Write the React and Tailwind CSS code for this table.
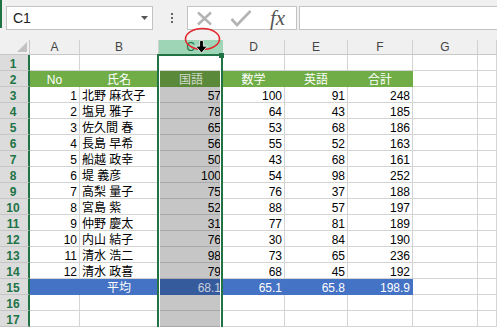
import React from 'react'

const GRID = 'grid grid-cols-[30px_50px_79px_64px_62px_63px_65px_65px_1fr]'
const FONT = { fontFamily: '"Liberation Sans", "Noto Sans CJK JP", sans-serif' }

const KIND = {
  plain: 'bg-white border-r border-b border-[#d4d4d4] text-black',
  active: 'bg-white border-b border-[#d4d4d4] text-black',
  sel: 'bg-[#c6c6c6] border-b border-[#a9a9a9] text-black',
  green: 'bg-[#70ad47] border-r border-b border-[#70ad47] text-white',
  greenSel: 'bg-[#5a8a39] border-b border-[#5a8a39] text-[#d3dacd]',
  blue: 'bg-[#4472c4] border-r border-b border-[#4472c4] text-white',
  blueSel: 'bg-[#365b9d] border-b border-[#365b9d] text-[#c8cfdc]',
}

const ALIGN = {
  left: 'justify-start pl-[2px]',
  right: 'justify-end pr-[2px]',
  center: 'justify-center',
}

function Cell({ kind = 'plain', align = 'right', children }) {
  return (
    <div className={`h-[16px] flex items-end overflow-hidden whitespace-nowrap leading-[12px] text-[12px] ${KIND[kind]} ${ALIGN[align]}`}>
      {children}
    </div>
  )
}

function RowHead({ n }) {
  return (
    <div className="h-[16px] flex items-end justify-center pr-[2px] bg-[#dcdcdc] border-b border-[#c6c6c6] border-r-2 border-r-[#217346] text-[#217346] font-bold text-[12px] leading-[12px]">
      {n}
    </div>
  )
}

const students = [
  [1, '北野 麻衣子', 57, 100, 91, 248],
  [2, '塩見 雅子', 78, 64, 43, 185],
  [3, '佐久間 春', 65, 53, 68, 186],
  [4, '長島 早希', 56, 55, 52, 163],
  [5, '船越 政幸', 50, 43, 68, 161],
  [6, '堤 義彦', 100, 54, 98, 252],
  [7, '高梨 量子', 75, 76, 37, 188],
  [8, '宮島 紫', 52, 88, 57, 197],
  [9, '仲野 慶太', 31, 77, 81, 189],
  [10, '内山 結子', 76, 30, 84, 190],
  [11, '清水 浩二', 98, 73, 65, 236],
  [12, '清水 政喜', 79, 68, 45, 192],
]

function EmptyRow({ n, active }) {
  return (
    <div className={GRID}>
      <RowHead n={n} />
      <Cell />
      <Cell />
      <Cell kind={active ? 'active' : 'sel'} />
      <Cell />
      <Cell />
      <Cell />
      <Cell />
      <Cell />
    </div>
  )
}

function Toolbar() {
  return (
    <div className="h-[40px] bg-[#f0f0f0] flex items-start">
      <div className="w-[2px] h-[28px] bg-[#217346]" />
      {/* name box */}
      <div className="ml-[4px] mt-[6px] w-[147px] h-[24px] bg-white border border-[#c3c3c3] flex items-center justify-between pl-[6px] pr-[4px]">
        <span className="text-[14px] text-[#222] leading-none">C1</span>
        <svg width="7" height="4" viewBox="0 0 7 4"><path d="M0 0h7L3.5 4z" fill="#555" /></svg>
      </div>
      {/* dots */}
      <div className="ml-[18px] mt-[13px] flex flex-col gap-[2px]">
        <span className="w-[2px] h-[2px] bg-[#666]" />
        <span className="w-[2px] h-[2px] bg-[#666]" />
        <span className="w-[2px] h-[2px] bg-[#666]" />
      </div>
      {/* formula buttons */}
      <div className="ml-[14px] mt-[6px] w-[110px] h-[24px] bg-white border border-[#c3c3c3] flex items-center">
        <svg className="ml-[8px]" width="17" height="15" viewBox="0 0 17 15">
          <path d="M2 1.5l13 12M15 1.5l-13 12" stroke="#b3b3b3" strokeWidth="2.4" />
        </svg>
        <svg className="ml-[17px]" width="22" height="17" viewBox="0 0 22 17">
          <path d="M1.5 9l5.5 6L20.5 1" stroke="#b3b3b3" strokeWidth="2.6" fill="none" />
        </svg>
        <span className="ml-[18px] text-[#555] italic text-[21px] leading-none" style={{ fontFamily: '"Liberation Serif", serif' }}>fx</span>
      </div>
      {/* formula input */}
      <div className="ml-[2px] mt-[6px] flex-1 h-[24px] bg-white border-y border-l border-[#c3c3c3]" />
    </div>
  )
}

function ColHeads() {
  const heads = ['A', 'B', 'C', 'D', 'E', 'F', 'G', '']
  return (
    <div className={`${GRID} h-[15px] bg-[#f0f0f0]`}>
      <div className="relative border-r border-b border-[#c8c8c8]">
        <svg className="absolute right-[2px] bottom-[2px]" width="10" height="10" viewBox="0 0 10 10"><path d="M10 0v10H0z" fill="#c2c2c2" /></svg>
      </div>
      {heads.map((h, i) => (
        <div
          key={i}
          className={`flex items-end justify-center leading-[12px] text-[12px] pb-[1px] border-b ${
            h === 'C'
              ? 'bg-[#9fd5b7] text-[#217346] border-[#217346] border-r border-r-[#9fd5b7]'
              : 'text-[#444] border-r border-[#d0d0d0] border-b-[#c8c8c8]'
          }`}
        >
          {h}
        </div>
      ))}
    </div>
  )
}

export default function App() {
  return (
    <div className="relative w-[497px] h-[327px] overflow-hidden bg-white select-none" style={FONT}>
      <Toolbar />
      <ColHeads />

      <EmptyRow n={1} active />

      <div className={GRID}>
        <RowHead n={2} />
        <Cell kind="green" align="center">No</Cell>
        <Cell kind="green" align="center">氏名</Cell>
        <Cell kind="greenSel" align="center">国語</Cell>
        <Cell kind="green" align="center">数学</Cell>
        <Cell kind="green" align="center">英語</Cell>
        <Cell kind="green" align="center">合計</Cell>
        <Cell />
        <Cell />
      </div>

      {students.map(([no, name, jp, math, en, total], i) => (
        <div key={no} className={GRID}>
          <RowHead n={i + 3} />
          <Cell>{no}</Cell>
          <Cell align="left">{name}</Cell>
          <Cell kind="sel">{jp}</Cell>
          <Cell>{math}</Cell>
          <Cell>{en}</Cell>
          <Cell>{total}</Cell>
          <Cell />
          <Cell />
        </div>
      ))}

      <div className={GRID}>
        <RowHead n={15} />
        <Cell kind="blue" />
        <Cell kind="blue" align="center">平均</Cell>
        <Cell kind="blueSel">68.1</Cell>
        <Cell kind="blue">65.1</Cell>
        <Cell kind="blue">65.8</Cell>
        <Cell kind="blue">198.9</Cell>
        <Cell />
        <Cell />
      </div>

      <EmptyRow n={16} />
      <EmptyRow n={17} />

      {/* column C selection frame */}
      <div className="absolute left-[157px] top-[54px] w-[66px] h-[280px] border-2 border-[#217346] pointer-events-none">
        <div className="h-full border border-white" />
      </div>
      <div className="absolute left-[219px] top-[53px] w-[5px] h-[5px] bg-[#217346] pointer-events-none" />

      {/* red circle + cursor */}
      <svg className="absolute left-[183px] top-[27px] pointer-events-none" width="40" height="25" viewBox="0 0 40 25">
        <ellipse cx="19.5" cy="12" rx="17" ry="10.5" fill="none" stroke="#e3262b" strokeWidth="1.6" />
      </svg>
      <svg className="absolute left-[195px] top-[40px] pointer-events-none" width="13" height="14" viewBox="0 0 13 14">
        <path d="M4.6 0.6h3.8v5.6h3.9L6.5 13 0.7 6.2h3.9z" fill="#000" stroke="#fff" strokeWidth="0.8" />
      </svg>
    </div>
  )
}
